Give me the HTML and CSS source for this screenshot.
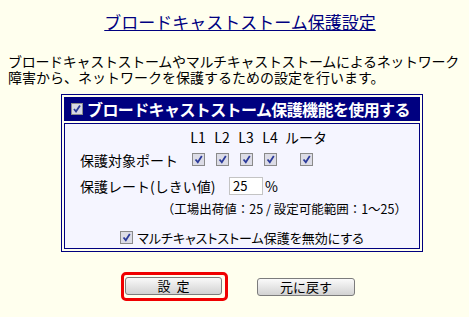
FILE: index.html
```html
<!DOCTYPE html>
<html lang="ja">
<head>
<meta charset="utf-8">
<title>ブロードキャストストーム保護設定</title>
<link rel="stylesheet" href="styles.css">
</head>
<body>
<div class="page">
  <h1 class="title">ブロードキャストストーム保護設定</h1>
  <p class="desc"><span class="line1">ブロードキャストストームやマルチキャストストームによるネットワーク</span><br>障害から、ネットワークを保護するための設定を行います。</p>

  <div class="panel">
    <div class="panel-head">
      <span class="cb cb-head"><svg viewBox="0 0 12 12" width="12" height="12"><rect x="0.5" y="0.5" width="11" height="11" fill="#d8d8e4" stroke="#8c8c8c"/><path d="M3 6 L5 8.5 L9 2.5" fill="none" stroke="#2b3a9a" stroke-width="1.8"/></svg></span>
      <span class="head-text">ブロードキャストストーム保護機能を使用する</span>
    </div>
    <div class="panel-body">
      <div class="port-row port-head">
        <span class="port-label"></span>
        <span class="port-col">L1</span>
        <span class="port-col">L2</span>
        <span class="port-col">L3</span>
        <span class="port-col">L4</span>
        <span class="port-col wide">ルータ</span>
      </div>
      <div class="port-row port-checks">
        <span class="port-label">保護対象ポート</span>
        <span class="port-col"><span class="cb"><svg viewBox="0 0 13 13" width="13" height="13"><rect x="0.5" y="0.5" width="12" height="12" fill="#dcdce6" stroke="#8a8a8a"/><path d="M3.5 6.5 L5.8 9.2 L9.8 3" fill="none" stroke="#2b3a9a" stroke-width="1.8"/></svg></span></span>
        <span class="port-col"><span class="cb"><svg viewBox="0 0 13 13" width="13" height="13"><rect x="0.5" y="0.5" width="12" height="12" fill="#dcdce6" stroke="#8a8a8a"/><path d="M3.5 6.5 L5.8 9.2 L9.8 3" fill="none" stroke="#2b3a9a" stroke-width="1.8"/></svg></span></span>
        <span class="port-col"><span class="cb"><svg viewBox="0 0 13 13" width="13" height="13"><rect x="0.5" y="0.5" width="12" height="12" fill="#dcdce6" stroke="#8a8a8a"/><path d="M3.5 6.5 L5.8 9.2 L9.8 3" fill="none" stroke="#2b3a9a" stroke-width="1.8"/></svg></span></span>
        <span class="port-col"><span class="cb"><svg viewBox="0 0 13 13" width="13" height="13"><rect x="0.5" y="0.5" width="12" height="12" fill="#dcdce6" stroke="#8a8a8a"/><path d="M3.5 6.5 L5.8 9.2 L9.8 3" fill="none" stroke="#2b3a9a" stroke-width="1.8"/></svg></span></span>
        <span class="port-col wide"><span class="cb"><svg viewBox="0 0 13 13" width="13" height="13"><rect x="0.5" y="0.5" width="12" height="12" fill="#dcdce6" stroke="#8a8a8a"/><path d="M3.5 6.5 L5.8 9.2 L9.8 3" fill="none" stroke="#2b3a9a" stroke-width="1.8"/></svg></span></span>
      </div>
      <div class="rate-row">
        <span class="rate-label">保護レート(しきい値)</span>
        <span class="rate-input">25</span>
        <span class="rate-unit">%</span>
      </div>
      <div class="note-row">（工場出荷値：25 / 設定可能範囲：1～25）</div>
      <div class="multi-row">
        <span class="cb"><svg viewBox="0 0 13 13" width="13" height="13"><rect x="0.5" y="0.5" width="12" height="12" fill="#dcdce6" stroke="#8a8a8a"/><path d="M3.5 6.5 L5.8 9.2 L9.8 3" fill="none" stroke="#2b3a9a" stroke-width="1.8"/></svg></span>
        <span class="multi-text">マルチキャストストーム保護を無効にする</span>
      </div>
    </div>
  </div>

  <div class="buttons">
    <span class="highlight"><span class="btn btn-set">設定</span></span>
    <span class="btn btn-reset">元に戻す</span>
  </div>
</div>
</body>
</html>
```

FILE: styles.css
```css
html {
  overflow: hidden;
}
body {
  margin: 8px;
  background: #ffffee;
  font-family: "Noto Sans CJK JP", "Noto Sans", sans-serif;
  color: #000;
}
.page {
  width: 464px;
}
.title {
  margin: 3px 0 0;
  font-size: 17px;
  line-height: 22px;
  font-weight: normal;
  text-align: center;
  color: #000080;
  text-decoration: underline;
  text-underline-offset: 1px;
}
.desc {
  margin: 20px 0 0;
  font-size: 14px;
  line-height: 16px;
  white-space: nowrap;
}
.line1 {
  letter-spacing: -0.3px;
}
.panel {
  margin: 9px 0 0 53px;
  width: 356px;
  border: 1px solid #000080;
  padding: 2px;
}
.panel-head {
  height: 24px;
  background: #000080;
  color: #fff;
  display: flex;
  align-items: center;
  padding-left: 7px;
  white-space: nowrap;
}
.cb {
  display: inline-flex;
  width: 13px;
  height: 13px;
}
.cb-head {
  width: 12px;
  height: 12px;
  margin-right: 4px;
}
.head-text {
  font-size: 16px;
  font-weight: bold;
  line-height: 20px;
  letter-spacing: -0.6px;
}
.panel-body {
  margin-top: 2px;
  border: 1px solid #000080;
  background: #f5f5ff;
  padding: 3px 0 2px 15px;
  font-size: 14px;
}
.port-row {
  display: flex;
  align-items: center;
}
.port-head {
  height: 20px;
}
.port-checks {
  height: 25px;
}
.port-label {
  width: 106px;
  white-space: nowrap;
}
.port-col {
  width: 24px;
  display: flex;
  justify-content: center;
}
.port-col.wide {
  width: 48px;
}
.rate-row {
  height: 28px;
  display: flex;
  align-items: center;
}
.rate-label {
  width: 149px;
  white-space: nowrap;
}
.rate-input {
  box-sizing: border-box;
  width: 34px;
  height: 18px;
  background: #fff;
  border: 1px solid #c4c4c4;
  font-size: 13px;
  line-height: 16px;
  padding-left: 3px;
}
.rate-unit {
  margin-left: 2px;
}
.note-row {
  height: 18px;
  line-height: 18px;
  font-size: 12.5px;
  text-align: right;
  padding-right: 12px;
  white-space: nowrap;
}
.multi-row {
  height: 18px;
  padding-top: 10px;
  display: flex;
  align-items: center;
  justify-content: center;
  margin-left: -15px;
  font-size: 13px;
}
.multi-text {
  margin-left: 4px;
  white-space: nowrap;
  font-feature-settings: "palt";
}
.buttons {
  margin-top: 20px;
  padding-left: 113px;
  display: flex;
  align-items: center;
}
.highlight {
  display: inline-flex;
  border: 3px solid #f00000;
  border-radius: 5px;
  padding: 2px 3px 3px 1px;
}
.btn {
  box-sizing: border-box;
  display: inline-flex;
  align-items: center;
  justify-content: center;
  height: 18px;
  border: 1px solid #7c7c7c;
  border-radius: 3px;
  background: linear-gradient(#fafafa, #e6e6e6 50%, #d2d2d2);
  font-size: 13px;
  line-height: 16px;
}
.btn-set {
  width: 97px;
  letter-spacing: 6px;
  padding-left: 6px;
}
.btn-reset {
  width: 98px;
  margin-left: 29px;
}
```
